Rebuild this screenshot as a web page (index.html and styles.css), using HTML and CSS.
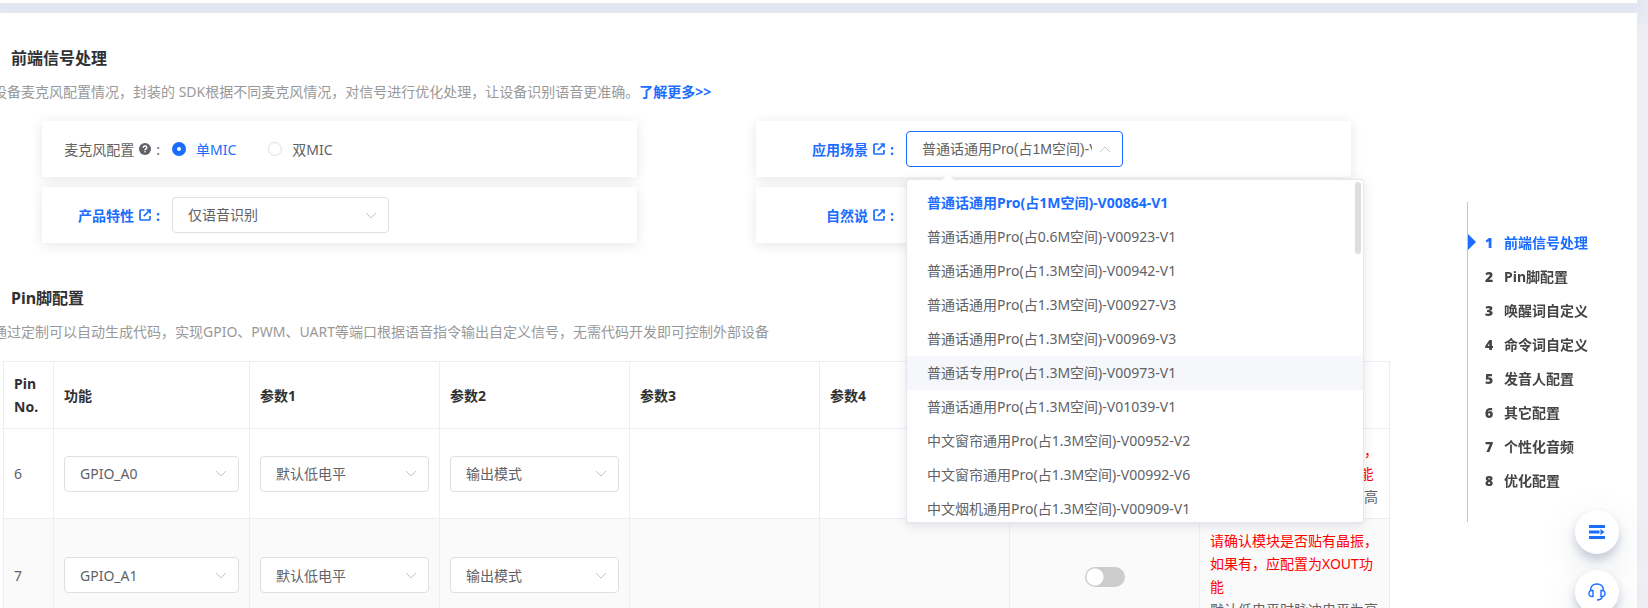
FILE: index.html
```html
<!DOCTYPE html>
<html lang="zh-CN">

<head>
  <meta charset="UTF-8" />
  <meta name="viewport" content="width=device-width, initial-scale=1.0" />
  <title>前端信号处理</title>
  <link rel="stylesheet" href="styles.css">
</head>

<body>
  <svg class="sprite" aria-hidden="true">
    <symbol id="icon-link" viewBox="0 0 12 12">
      <path d="M5.500 1H2Q1 1 1 2v8Q1 11 2 11h8Q11 11 11 10V7" fill="none" stroke="currentColor" stroke-width="1.700" />
      <path d="M4.800 7.200L10.500 1.500M7.500 1H11v3.500" fill="none" stroke="currentColor" stroke-width="1.700" />
    </symbol>
    <symbol id="icon-help" viewBox="0 0 12 12">
      <circle cx="6" cy="6" r="6" fill="currentColor" />
      <path d="M4.2 4.8Q4.2 3 6 3t1.8 1.6Q7.800 5.500 6.800 6 6 6.400 6 7.200" fill="none" stroke="#fff" stroke-width="1.400" />
      <circle cx="6" cy="8.800" r=".8" fill="#fff" />
    </symbol>
  </svg>

  <div class="top-panel"></div>

  <main class="panel">
    <section class="section">
      <h2>前端信号处理</h2>
      <p class="desc">设备麦克风配置情况，封装的 SDK根据不同麦克风情况，对信号进行优化处理，让设备识别语音更准确。<a href="#">了解更多&gt;&gt;</a></p>

      <div class="cards">
        <div class="card">
          <span class="label">麦克风配置 <svg class="icon"><use href="#icon-help" /></svg><span class="colon">:</span></span>
          <div class="radios">
            <label class="radio"><input type="radio" name="mic" checked /><span>单MIC</span></label>
            <label class="radio"><input type="radio" name="mic" /><span>双MIC</span></label>
          </div>
        </div>
        <div class="card card-wide">
          <a class="label" href="#">应用场景 <svg class="icon"><use href="#icon-link" /></svg><span class="colon">:</span></a>
          <div class="picker">
            <select class="select open" aria-label="应用场景">
              <option>普通话通用Pro(占1M空间)-V00864-V1</option>
            </select>
            <div class="dropdown">
              <ul>
                <li class="selected">普通话通用Pro(占1M空间)-V00864-V1</li>
                <li>普通话通用Pro(占0.6M空间)-V00923-V1</li>
                <li>普通话通用Pro(占1.3M空间)-V00942-V1</li>
                <li>普通话通用Pro(占1.3M空间)-V00927-V3</li>
                <li>普通话通用Pro(占1.3M空间)-V00969-V3</li>
                <li class="hover">普通话专用Pro(占1.3M空间)-V00973-V1</li>
                <li>普通话通用Pro(占1.3M空间)-V01039-V1</li>
                <li>中文窗帘通用Pro(占1.3M空间)-V00952-V2</li>
                <li>中文窗帘通用Pro(占1.3M空间)-V00992-V6</li>
                <li>中文烟机通用Pro(占1.3M空间)-V00909-V1</li>
              </ul>
              <span class="thumb"></span>
            </div>
          </div>
        </div>
        <div class="card">
          <a class="label" href="#">产品特性 <svg class="icon"><use href="#icon-link" /></svg><span class="colon">:</span></a>
          <select class="select" aria-label="产品特性">
            <option>仅语音识别</option>
          </select>
        </div>
        <div class="card card-wide">
          <a class="label" href="#">自然说 <svg class="icon"><use href="#icon-link" /></svg><span class="colon">:</span></a>
        </div>
      </div>
    </section>

    <section class="section">
      <h2>Pin脚配置</h2>
      <p class="desc">通过定制可以自动生成代码，实现GPIO、PWM、UART等端口根据语音指令输出自定义信号，无需代码开发即可控制外部设备</p>

      <table class="pins">
        <colgroup>
          <col class="col-no" />
          <col class="col-fn" />
          <col span="6" />
        </colgroup>
        <thead>
          <tr>
            <th>Pin No.</th>
            <th>功能</th>
            <th>参数1</th>
            <th>参数2</th>
            <th>参数3</th>
            <th>参数4</th>
            <th></th>
            <th></th>
          </tr>
        </thead>
        <tbody>
          <tr>
            <td>6</td>
            <td><select class="select" aria-label="功能"><option>GPIO_A0</option></select></td>
            <td><select class="select" aria-label="参数1"><option>默认低电平</option></select></td>
            <td><select class="select" aria-label="参数2"><option>输出模式</option></select></td>
            <td></td>
            <td></td>
            <td class="center"><input class="switch" type="checkbox" aria-label="开关" /></td>
            <td><span class="warn">请确认模块是否贴有晶振，如果有，应配置为XIN功能</span><br>默认低电平时脉冲电平为高</td>
          </tr>
          <tr>
            <td>7</td>
            <td><select class="select" aria-label="功能"><option>GPIO_A1</option></select></td>
            <td><select class="select" aria-label="参数1"><option>默认低电平</option></select></td>
            <td><select class="select" aria-label="参数2"><option>输出模式</option></select></td>
            <td></td>
            <td></td>
            <td class="center"><input class="switch" type="checkbox" aria-label="开关" /></td>
            <td><span class="warn">请确认模块是否贴有晶振，如果有，应配置为XOUT功能</span><br>默认低电平时脉冲电平为高</td>
          </tr>
        </tbody>
      </table>
    </section>
  </main>

  <nav class="anchors">
    <a class="active" href="#"><b>1</b>前端信号处理</a>
    <a href="#"><b>2</b>Pin脚配置</a>
    <a href="#"><b>3</b>唤醒词自定义</a>
    <a href="#"><b>4</b>命令词自定义</a>
    <a href="#"><b>5</b>发音人配置</a>
    <a href="#"><b>6</b>其它配置</a>
    <a href="#"><b>7</b>个性化音频</a>
    <a href="#"><b>8</b>优化配置</a>
  </nav>

  <div class="tools">
    <button type="button" aria-label="目录">
      <svg width="16" height="14" viewBox="0 0 16 14" fill="#1a6dff">
        <path d="M0 0h16v3H0zM0 5.500h10.500v3H0zM0 11h16v3H0zM11.500 4l4 3-4 3z" />
      </svg>
    </button>
    <button type="button" aria-label="客服">
      <svg width="18" height="18" viewBox="0 0 18 18" fill="none" stroke="#1a6dff" stroke-width="1.400">
        <path d="M2.500 8V7Q3 1 9 1t6.500 6v1M5 7.500v6Q1 14 1 10.500T5 7.500zM13 7.500v6q4 .5 4-3T13 7.500zM14.500 13.500Q13.500 17 9 17" />
      </svg>
    </button>
  </div>
</body>

</html>
```
FILE: styles.css
```css
* {
  box-sizing: border-box;
}

body {
  margin: 0;
  height: 100vh;
  overflow: hidden;
  font-family: "Noto Sans", "Noto Sans CJK SC", sans-serif;
  font-size: 14px;
  color: #606266;
  background: #eeeef3;
}

a {
  color: #1a6dff;
  font-weight: bold;
  text-decoration: none;
}

.sprite {
  display: none;
}

.top-panel {
  height: 3px;
  margin-right: 11px;
  background: #fff;
  box-shadow: 0 4px 20px 10px rgba(205, 217, 240, 0.5);
}

.panel {
  margin: 10px 11px 0 0;
  padding-top: 32px;
  background: #fff;
  position: relative;
}

.section {
  margin-bottom: 42px;
}

h2 {
  margin: 0 0 9px 11px;
  font-size: 16px;
  line-height: 26px;
  color: #303133;
}

.desc {
  margin: 0 0 17px -7px;
  line-height: 24px;
  color: #999;
  white-space: nowrap;
}

/* setting cards */
.cards {
  display: grid;
  grid-template-columns: 1fr 1fr;
  gap: 10px 119px;
  margin: 0 286px 0 42px;
}

.card {
  display: flex;
  align-items: center;
  height: 56px;
  background: #fff;
  box-shadow: 0 2px 12px rgba(0, 0, 0, 0.1);
}

.label {
  display: flex;
  align-items: center;
  justify-content: flex-end;
  gap: 5px;
  width: 130px;
  padding-right: 12px;
}

.card-wide .label {
  width: 150px;
}

.icon {
  width: 12px;
  height: 12px;
}

.radios {
  display: flex;
  gap: 32px;
}

.radio {
  display: flex;
  align-items: center;
  gap: 10px;
}

.radio input {
  appearance: none;
  width: 14px;
  height: 14px;
  margin: 0;
  border: 1px solid #dcdfe6;
  border-radius: 50%;
  background: #fff;
}

.radio input:checked {
  border: 5px solid #1a6dff;
}

.radio input:checked + span {
  color: #1a6dff;
}

.select {
  appearance: none;
  display: block;
  width: 100%;
  height: 36px;
  padding: 0 30px 0 15px;
  border: 1px solid #dcdfe6;
  border-radius: 4px;
  font-family: "Liberation Sans", "Noto Sans CJK SC", sans-serif;
  font-size: 14px;
  color: #606266;
  background: #fff url("data:image/svg+xml,%3Csvg xmlns='http://www.w3.org/2000/svg' width='12' height='7' fill='none' stroke='%23c0c4cc'%3E%3Cpath d='M1 1l5 5 5-5'/%3E%3C/svg%3E") no-repeat right 11px center;
}

.card .select {
  width: 217px;
}

.pins .select {
  font-family: "Noto Sans", "Noto Sans CJK SC", sans-serif;
}

.select.open {
  border-color: #1a6dff;
  background-image: url("data:image/svg+xml,%3Csvg xmlns='http://www.w3.org/2000/svg' width='12' height='7' fill='none' stroke='%23c0c4cc'%3E%3Cpath d='M1 6l5-5 5 5'/%3E%3C/svg%3E");
}

/* open option list */
.picker {
  position: relative;
}

.dropdown {
  position: absolute;
  top: 48px;
  left: 0;
  z-index: 5;
  width: 458px;
  border: 1px solid #e4e7ed;
  border-bottom-width: 2px;
  border-radius: 4px;
  background: #fff;
  box-shadow: 0 2px 12px rgba(0, 0, 0, 0.1);
}

.dropdown::before {
  content: "";
  position: absolute;
  top: -6px;
  left: 35px;
  border: 6px solid transparent;
  border-top: 0;
  border-bottom-color: #fff;
}

.dropdown ul {
  height: 342px;
  margin: 0;
  padding: 6px 0 0;
  overflow: hidden;
  list-style: none;
}

.dropdown li {
  padding: 0 20px;
  line-height: 34px;
}

.dropdown .selected {
  color: #1a6dff;
  font-weight: bold;
}

.dropdown .hover {
  background: #f5f7fa;
}

.thumb {
  position: absolute;
  top: 2px;
  right: 2px;
  width: 6px;
  height: 72px;
  border-radius: 3px;
  background: #dddee0;
}

/* pin table */
.pins {
  width: calc(100% - 250px);
  margin-left: 3px;
  border-collapse: collapse;
  table-layout: fixed;
  line-height: 23px;
}

.col-no {
  width: 50px;
}

.col-fn {
  width: 196px;
}

.pins th,
.pins td {
  padding: 10px;
  border: 1px solid #ebeef5;
  text-align: left;
}

.pins th {
  color: #303133;
}

.pins tr:nth-child(even) td {
  background: #fafafa;
}

.pins .center {
  text-align: center;
}

.warn {
  color: #f00;
}

.switch {
  appearance: none;
  width: 40px;
  height: 20px;
  margin: 0;
  border-radius: 10px;
  vertical-align: middle;
  background: radial-gradient(circle at 10px 10px, #fff 8px, #ccc 9px);
}

/* side navigation */
.anchors {
  position: fixed;
  top: 202px;
  right: 20px;
  width: 161px;
  padding: 24px 0;
  border-left: 1px solid #c4c4c4;
}

.anchors a {
  display: flex;
  position: relative;
  padding-left: 17px;
  line-height: 34px;
  color: #444;
}

.anchors b {
  width: 19px;
}

.anchors .active {
  color: #1a6dff;
}

.anchors .active::before {
  content: "";
  position: absolute;
  left: 0;
  top: 8px;
  border: 8px solid transparent;
  border-left-color: #1a6dff;
  border-right: 0;
}

.tools {
  position: fixed;
  top: 510px;
  right: 29px;
  display: grid;
  gap: 16px;
}

.tools button {
  display: flex;
  align-items: center;
  justify-content: center;
  width: 44px;
  height: 44px;
  padding: 0;
  border: 0;
  border-radius: 50%;
  background: #fff;
  box-shadow: 0 6px 10px rgba(60, 80, 120, 0.25), 0 12px 40px rgba(60, 80, 120, 0.12);
}
```
